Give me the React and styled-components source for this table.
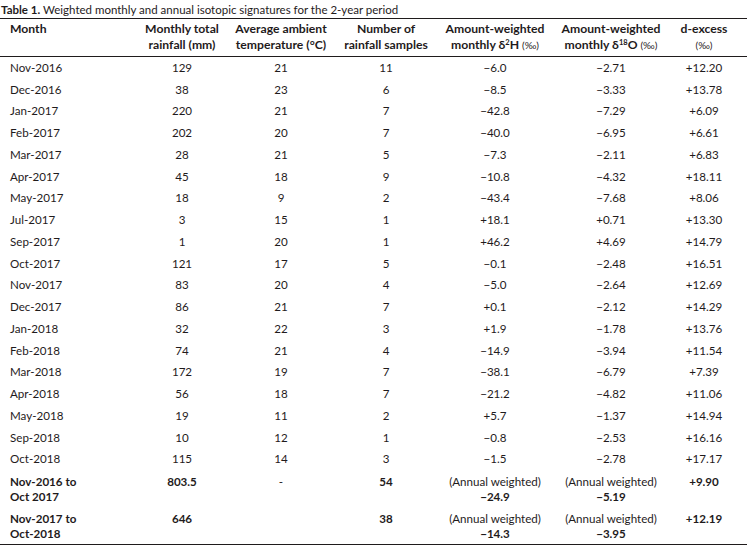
import React from "react";
import styled, { createGlobalStyle } from "styled-components";

const GlobalStyle = createGlobalStyle`
  html, body {
    margin: 0;
    padding: 0;
    background: #ffffff;
  }
  body {
    font-family: Lato, "Liberation Sans", sans-serif;
    color: #1f1b1c;
  }
`;

const Page = styled.div`
  width: 747px;
  height: 552px;
  overflow: hidden;
`;

const Caption = styled.div`
  font-size: 11.5px;
  line-height: 14px;
  padding: 3px 0 0 1px;
  height: 18px;
  box-sizing: border-box;
  white-space: nowrap;

  b {
    font-weight: 700;
  }
`;

const Table = styled.table`
  width: 747px;
  border-collapse: collapse;
  table-layout: fixed;
  font-size: 11.6px;
  border-top: 1.5px solid #1f1b1c;
  border-bottom: 1.5px solid #1f1b1c;
`;

const HeadRow = styled.tr`
  border-bottom: 1.5px solid #1f1b1c;
`;

const Th = styled.th`
  font-weight: 700;
  font-size: 12.2px;
  line-height: 16px;
  padding: 2px ${(p) => (p.$last ? "9px" : "0")} 3px ${(p) => (p.$first ? "10px" : "0")};
  text-align: ${(p) => (p.$first ? "left" : "center")};
  vertical-align: top;
  white-space: nowrap;
`;

const Unit = styled.span`
  font-weight: 400;
  font-size: 10px;
`;

const Sup = styled.sup`
  font-size: 7.5px;
  vertical-align: 4px;
  line-height: 0;
`;

const Row = styled.tr`
  height: 21.75px;
`;

const Td = styled.td`
  padding: 0 ${(p) => (p.$last ? "9px" : "0")} 0 ${(p) => (p.$first ? "10px" : "0")};
  text-align: ${(p) => (p.$first ? "left" : "center")};
  vertical-align: middle;
  line-height: 15px;
  white-space: nowrap;
`;

const TotalTd = styled(Td)`
  vertical-align: top;
  padding-top: 4px;
  padding-bottom: 3px;
  font-weight: ${(p) => (p.$bold ? 700 : 400)};
`;

const Strong = styled.div`
  font-weight: 700;
`;

const rows = [
  ["Nov-2016", "129", "21", "11", "\u22126.0", "\u22122.71", "+12.20"],
  ["Dec-2016", "38", "23", "6", "\u22128.5", "\u22123.33", "+13.78"],
  ["Jan-2017", "220", "21", "7", "\u221242.8", "\u22127.29", "+6.09"],
  ["Feb-2017", "202", "20", "7", "\u221240.0", "\u22126.95", "+6.61"],
  ["Mar-2017", "28", "21", "5", "\u22127.3", "\u22122.11", "+6.83"],
  ["Apr-2017", "45", "18", "9", "\u221210.8", "\u22124.32", "+18.11"],
  ["May-2017", "18", "9", "2", "\u221243.4", "\u22127.68", "+8.06"],
  ["Jul-2017", "3", "15", "1", "+18.1", "+0.71", "+13.30"],
  ["Sep-2017", "1", "20", "1", "+46.2", "+4.69", "+14.79"],
  ["Oct-2017", "121", "17", "5", "\u22120.1", "\u22122.48", "+16.51"],
  ["Nov-2017", "83", "20", "4", "\u22125.0", "\u22122.64", "+12.69"],
  ["Dec-2017", "86", "21", "7", "+0.1", "\u22122.12", "+14.29"],
  ["Jan-2018", "32", "22", "3", "+1.9", "\u22121.78", "+13.76"],
  ["Feb-2018", "74", "21", "4", "\u221214.9", "\u22123.94", "+11.54"],
  ["Mar-2018", "172", "19", "7", "\u221238.1", "\u22126.79", "+7.39"],
  ["Apr-2018", "56", "18", "7", "\u221221.2", "\u22124.82", "+11.06"],
  ["May-2018", "19", "11", "2", "+5.7", "\u22121.37", "+14.94"],
  ["Sep-2018", "10", "12", "1", "\u22120.8", "\u22122.53", "+16.16"],
  ["Oct-2018", "115", "14", "3", "\u22121.5", "\u22122.78", "+17.17"],
];

const totals = [
  {
    period: ["Nov-2016 to", "Oct 2017"],
    rain: "803.5",
    temp: "-",
    samples: "54",
    h: "\u221224.9",
    o: "\u22125.19",
    d: "+9.90",
  },
  {
    period: ["Nov-2017 to", "Oct-2018"],
    rain: "646",
    temp: "",
    samples: "38",
    h: "\u221214.3",
    o: "\u22123.95",
    d: "+12.19",
  },
];

const widths = [136, 92, 106, 104, 114, 118, 77];

export default function App() {
  return (
    <Page>
      <GlobalStyle />
      <Caption>
        <b>Table 1.</b> Weighted monthly and annual isotopic signatures for the 2-year period
      </Caption>
      <Table>
        <colgroup>
          {widths.map((w, i) => (
            <col key={i} style={{ width: w }} />
          ))}
        </colgroup>
        <thead>
          <HeadRow>
            <Th $first>Month</Th>
            <Th>
              Monthly total
              <br />
              rainfall (mm)
            </Th>
            <Th>
              Average ambient
              <br />
              temperature (°C)
            </Th>
            <Th>
              Number of
              <br />
              rainfall samples
            </Th>
            <Th>
              Amount-weighted
              <br />
              monthly δ<Sup>2</Sup>H <Unit>(‰)</Unit>
            </Th>
            <Th>
              Amount-weighted
              <br />
              monthly δ<Sup>18</Sup>O <Unit>(‰)</Unit>
            </Th>
            <Th $last>
              d-excess
              <br />
              <Unit>(‰)</Unit>
            </Th>
          </HeadRow>
        </thead>
        <tbody>
          {rows.map((r) => (
            <Row key={r[0]}>
              {r.map((c, i) => (
                <Td key={i} $first={i === 0} $last={i === 6}>
                  {c}
                </Td>
              ))}
            </Row>
          ))}
          {totals.map((t) => (
            <tr key={t.period[0]}>
              <TotalTd $first $bold>
                {t.period[0]}
                <br />
                {t.period[1]}
              </TotalTd>
              <TotalTd $bold>{t.rain}</TotalTd>
              <TotalTd>{t.temp}</TotalTd>
              <TotalTd $bold>{t.samples}</TotalTd>
              <TotalTd>
                (Annual weighted)
                <Strong>{t.h}</Strong>
              </TotalTd>
              <TotalTd>
                (Annual weighted)
                <Strong>{t.o}</Strong>
              </TotalTd>
              <TotalTd $last $bold>
                {t.d}
              </TotalTd>
            </tr>
          ))}
        </tbody>
      </Table>
    </Page>
  );
}
